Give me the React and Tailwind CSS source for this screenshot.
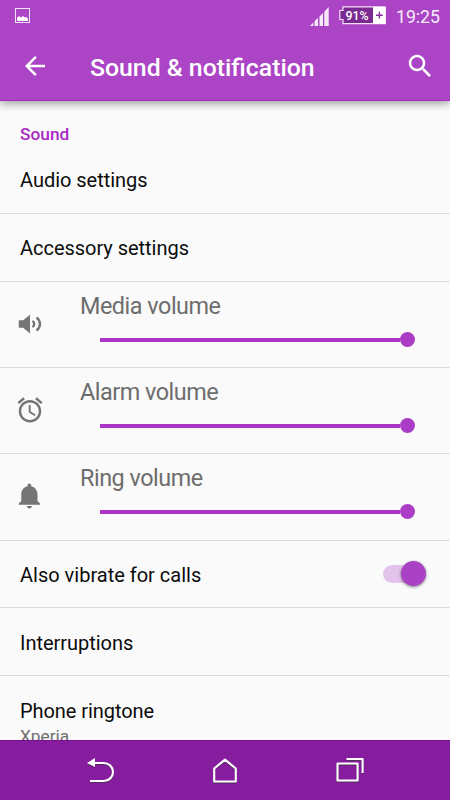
const divider = 'border-b border-[#dcdcdc]';

function StatusBar() {
  return (
    <div className="flex h-8 items-start pl-[15px] pr-[10px]">
      <svg className="mt-[8px] h-[15px] w-[15px]" viewBox="0 0 15 15">
        <rect x="0.5" y="0.5" width="14" height="14" fill="none" stroke="#f3e3f7" />
        <path d="M2 13V10L4 8L6 9.5L8 8L10 9.5L11.5 9L13 11V13Z" fill="#fff" />
      </svg>
      <svg className="ml-auto mt-[7px] h-[19px] w-[19px]" viewBox="0 0 19 19">
        <path d="M0 19L3.4 15.6V19ZM4.6 19V14.2L8 10.8V19ZM9.5 19V9.5L13 6V19ZM14.3 19V4.7L18.7 0V19Z" fill="#f6e9f9" />
      </svg>
      <div className="ml-[10px] mt-[6px] flex h-[19px] w-[47px]">
        <svg className="h-[19px] w-[47px]" viewBox="0 0 47 19">
          <path d="M4 .9H46V17.6H4V13.5H.8V4.5H4Z" fill="#7b2a91" stroke="#f3e0f7" strokeWidth="1.2" />
          <rect x="34" y="1" width="12.8" height="17" fill="#fff" />
          <path d="M40.4 5.8V12.6M37 9.2H43.8" stroke="#8b2fa3" strokeWidth="1.4" />
          <text x="6.5" y="13.8" fontSize="12.5" fontWeight="500" fontFamily="Roboto, sans-serif" fill="#fff" textLength="23" lengthAdjust="spacingAndGlyphs">91%</text>
        </svg>
      </div>
      <span className="ml-[10px] mt-[5px] text-[17.7px] leading-6 text-[#f8edfa]">19:25</span>
    </div>
  );
}

function Header() {
  return (
    <header className="relative z-10 h-[101px] shrink-0 border-b border-[#a52bc2] bg-[#ab45c5] shadow-[0_3px_8px_rgba(0,0,0,0.35)]">
      <StatusBar />
      <div className="flex h-[68px] items-center pl-5 pr-[15px]">
        <svg className="h-[30px] w-[30px]" viewBox="0 0 24 24" fill="#fff">
          <path d="M20 11H7.83l5.59-5.59L12 4l-8 8 8 8 1.41-1.41L7.83 13H20v-2z" />
        </svg>
        <h1 className="ml-10 whitespace-nowrap pt-1 text-[24.8px] font-medium leading-8 text-white">Sound &amp; notification</h1>
        <svg className="ml-auto h-[30.5px] w-[30.5px]" viewBox="0 0 24 24" fill="#fff">
          <path d="M15.5 14h-.79l-.28-.27C15.41 12.59 16 11.11 16 9.5 16 5.91 13.09 3 9.5 3S3 5.91 3 9.5 5.91 16 9.5 16c1.61 0 3.09-.59 4.23-1.57l.27.28v.79l5 4.99L20.49 19l-4.99-5zm-6 0C7.01 14 5 11.99 5 9.5S7.01 5 9.5 5 14 7.01 14 9.5 11.99 14 9.5 14z" />
        </svg>
      </div>
    </header>
  );
}

function VolumeRow({ label, icon }) {
  return (
    <div className={`flex h-[86.2px] shrink-0 ${divider}`}>
      <div className="ml-[15px] mt-[27px] w-[65px]">
        <svg className="h-[30px] w-[30px]" viewBox="0 0 24 24" fill="#757575">{icon}</svg>
      </div>
      <div className="flex-1">
        <div className="mt-[8px] text-[23.4px] leading-8 tracking-[-0.48px] text-[#6d6d6d]">{label}</div>
        <div className="ml-5 mt-[10px] flex h-[15px] w-[315px] items-center">
          <div className="h-1 flex-1 bg-[#ab35c7]" />
          <div className="h-[15px] w-[15px] rounded-full bg-[#ab3cc6]" />
        </div>
      </div>
    </div>
  );
}

const speaker = (
  <>
    <path d="M3 9v6h3.5l5.5 4.5V4.5L6.500 9z" />
    <path d="M14 9.500a3 3 0 0 1 0 5M17.200 6.800a6.300 6.300 0 0 1 0 10.400" fill="none" stroke="#757575" strokeWidth="1.9" />
  </>
);
const alarm = (
  <path d="M22 5.720l-4.600-3.860-1.290 1.530 4.600 3.860L22 5.720zM7.880 3.390L6.600 1.860 2 5.710l1.290 1.530 4.590-3.850zM12.500 8H11v6l4.750 2.850.75-1.230-4-2.370V8zM12 4c-4.970 0-9 4.030-9 9s4.020 9 9 9c4.970 0 9-4.030 9-9s-4.030-9-9-9zm0 16c-3.870 0-7-3.130-7-7s3.130-7 7-7 7 3.130 7 7-3.130 7-7 7z" />
);
const bell = (
  <path d="M11.500 22c1.100 0 2-.9 2-2h-4c0 1.100.9 2 2 2zm6.500-6v-5.500c0-3.070-2.130-5.640-5-6.320V3.500c0-.83-.67-1.500-1.500-1.500S10 2.670 10 3.500v.68c-2.870.68-5 3.250-5 6.320V16l-2 2v1h17v-1l-2-2z" />
);

function NavBar() {
  return (
    <nav className="flex h-[60px] shrink-0 items-center border-t border-[#7b0f95] bg-[#861c9e] pl-[85px]">
      <svg className="h-[30px] w-[30px] drop-shadow-[0_1px_0.5px_rgba(60,60,60,0.7)]" viewBox="0 0 30 30">
        <path d="M2 7L10 2V11Z" fill="#fff" />
        <path d="M8 7H18.500C24 7 28 11 28 16S24 25 18.500 25H5" fill="none" stroke="#fff" strokeWidth="2.100" />
      </svg>
      <svg className="ml-[95px] h-[30px] w-[30px] drop-shadow-[0_1px_0.5px_rgba(60,60,60,0.7)]" viewBox="0 0 30 30">
        <path d="M4.200 25.500V12.500L15 3.600L25.800 12.500V25.500Z" fill="none" stroke="#fff" strokeWidth="2.100" strokeLinejoin="round" />
      </svg>
      <svg className="ml-[95px] h-[30px] w-[30px] drop-shadow-[0_1px_0.5px_rgba(60,60,60,0.7)]" viewBox="0 0 30 30">
        <path d="M2.500 7.500H22.600V24.500H2.500ZM11.500 3H27.600V17" fill="none" stroke="#fff" strokeWidth="2.100" strokeLinejoin="round" />
      </svg>
    </nav>
  );
}

export default function App() {
  return (
    <div className="flex h-[800px] w-[450px] flex-col overflow-hidden bg-[#fafafa] font-['Roboto',sans-serif] text-[20px] text-[#0c0c0c]">
      <Header />
      <main className="flex min-h-0 flex-1 flex-col overflow-hidden">
        <section className={`h-[113px] shrink-0 px-5 pt-[21px] ${divider}`}>
          <h2 className="text-[17.3px] font-medium leading-6 text-[#a929c4]">Sound</h2>
          <div className="mt-[20px] leading-7 tracking-[-0.03px]">Audio settings</div>
        </section>
        <div className={`flex h-[68px] shrink-0 items-center px-5 tracking-[-0.03px] ${divider}`}>Accessory settings</div>
        <VolumeRow label="Media volume" icon={speaker} />
        <VolumeRow label="Alarm volume" icon={alarm} />
        <VolumeRow label="Ring volume" icon={bell} />
        <div className={`flex h-[67.500px] shrink-0 items-center justify-between pl-5 pr-6 ${divider}`}>
          <span className="pt-[2px]">Also vibrate for calls</span>
          <div className="flex h-[25px] w-[43px] items-center">
            <div className="h-[18px] w-[30px] rounded-full bg-[#e3c3eb]" />
            <div className="-ml-[12px] h-[25px] w-[25px] shrink-0 rounded-full bg-[#ab41c4] shadow-[0_1px_3px_rgba(0,0,0,0.5)]" />
          </div>
        </div>
        <div className={`flex h-[68px] shrink-0 items-center px-5 pt-[2px] tracking-[-0.03px] ${divider}`}>Interruptions</div>
        <div className="px-5 pt-[21px]">
          <div className="leading-7 tracking-[-0.06px]">Phone ringtone</div>
          <div className="-mt-px text-[17.3px] leading-6 text-[#6f6f6f]">Xperia</div>
        </div>
      </main>
      <NavBar />
    </div>
  );
}
